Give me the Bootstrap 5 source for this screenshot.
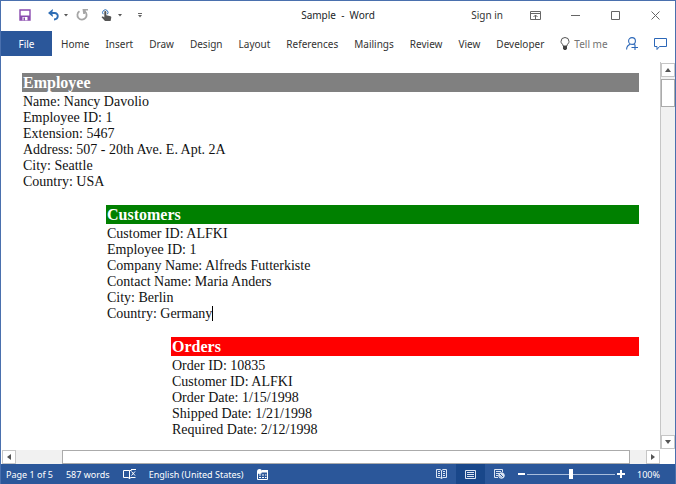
<!DOCTYPE html>
<html lang="en">
<head>
<meta charset="utf-8">
<meta name="viewport" content="width=device-width, initial-scale=1">
<title>Sample - Word</title>
<link href="https://cdn.jsdelivr.net/npm/bootstrap@5.3.0/dist/css/bootstrap.min.css" rel="stylesheet">
<style>
:root { --word-blue: #2b579a; --edge: #c6c6c6; }
body { font-family: "Noto Sans", "Open Sans", sans-serif; font-size: 10px; line-height: 16px; color: #333; }
button { color: inherit; background: transparent; border: 0; padding: 0; }
svg { display: block; flex: none; }
.app-window { border: 1px solid #4a70ae; border-bottom: 0; }
.title-row { display: grid; grid-template-columns: 1fr auto 1fr; height: 30px; }
.quick-tools { padding-left: 18px; }
.win-btn { width: 40px; height: 28px; }
.ribbon { height: 25px; }
.ribbon .nav-link { color: #333; padding: 0 8px; line-height: 26px; }
.ribbon .file-tab { background: var(--word-blue); color: #fff; width: 51px; flex: none; line-height: 26px; margin-right: 1px; padding: 0; }
.ribbon .tell-me { color: #737373; }
.page-area { padding: 17px 21px 0 21px; font: 14px/16px "Liberation Serif", "Times New Roman", serif; color: #111; }
.report-group { margin-bottom: 15px; }
.report-group h2 { font-size: 16px; line-height: 20px; height: 19px; font-weight: 700; color: #fff; margin: 0 0 2px; padding-left: 1px; }
.report-group p { margin: 0; padding-left: 1px; }
.employee h2 { background: #808080; }
.customers { margin-left: 84px; }
.customers h2 { background: #008000; }
.orders { margin-left: 149px; }
.orders h2 { background: #f00; }
.caret { display: inline-block; width: 1px; height: 15px; background: #000; vertical-align: -3px; }
.scroll-y { width: 15px; margin-top: 6px; border-left: 1px solid var(--edge); padding: 1px 0 0; background: #fff; }
.scroll-x { height: 14px; padding-left: 1px; }
.scroll-btn { width: 14px; height: 14px; border: 1px solid var(--edge); background: #fff; }
.lane { background: #f1f1f1; }
.lane-y { padding-top: 2px; }
.thumb-y { height: 28px; border: 1px solid #ababab; background: #fff; }
.thumb-x { border: 1px solid #ababab; background: #fff; margin: 0 16px 0 46px; }
.corner { height: 15px; }
.status { height: 20px; margin: 0 -1px; padding: 0 16px 0 6px; background: var(--word-blue); color: #fff; font-size: 9px; line-height: 19px; }
.status-gap { gap: 13px; }
.view-btn { width: 29px; height: 20px; }
.view-btn.active { background: #19478a; }
.zoom-range { appearance: none; width: 88px; height: 13px; margin: 0 2px; background: linear-gradient(#a9bddc, #a9bddc) center / 100% 1px no-repeat; }
.zoom-range::-webkit-slider-thumb { appearance: none; width: 4px; height: 10px; background: #fff; border: 0; border-radius: 0; }
.zoom-range::-moz-range-thumb { width: 4px; height: 10px; background: #fff; border: 0; border-radius: 0; }
</style>
<script src="https://cdn.jsdelivr.net/npm/bootstrap@5.3.0/dist/js/bootstrap.bundle.min.js"></script>
</head>
<body>
<div class="app-window d-flex flex-column vh-100 overflow-hidden bg-white">
  <header>
    <div class="title-row">
      <div class="quick-tools d-flex align-items-center pb-1">
        <button type="button" aria-label="Save"><svg width="12" height="12" viewBox="0 0 12 12"><path d="M1 1h10v10H1z" fill="#fff" stroke="#8a4baf" stroke-width="1.4"/><path d="M1 6.500h10V11H1z" fill="#8a4baf"/><path d="M3.500 8h5v3.300h-5z" fill="#fff"/><path d="M4.500 8.500h1.500v3h-1.500z" fill="#8a4baf"/></svg></button>
        <button type="button" class="ms-3" aria-label="Undo"><svg width="13" height="12" viewBox="0 0 11 12"><path d="M1.500 4h5C11.200 4 10.700 10.500 6 10.500" fill="none" stroke="#2f6eb5" stroke-width="1.900"/><path d="M4.800 0 0 4l4.800 4V5.800L2.800 4l2-1.800z" fill="#2f6eb5"/></svg></button>
        <button type="button" class="ms-1" aria-label="Undo list"><svg width="4" height="3"><path d="M0 0h4L2 2.500z" fill="#555"/></svg></button>
        <button type="button" aria-label="Repeat" class="ms-2"><svg width="12" height="12" viewBox="0 0 12 12"><path d="M3.500 2.200A4.600 4.600 0 1 0 8.800 2.400" fill="none" stroke="#a6a6a6" stroke-width="1.800"/><path d="M6.500 0h5.500v1.500H9.800l-1 3.500H7.200z" fill="#a6a6a6"/></svg></button>
        <button type="button" class="ms-2 ps-1" aria-label="Touch mode"><svg width="14" height="13" viewBox="0 0 14 13"><path d="M3.200 5.200a2.700 2.700 0 1 1 4.200 0" fill="none" stroke="#2f6eb5" stroke-width="1"/><path d="M4.300 3c0-1.300 2-1.300 2 0v3.300l4.200 1c.600.200.900.700.800 1.300L10.600 12H5L1.800 8.600c-.5-.8.500-1.600 1.200-1l1.300 1z" fill="#555"/></svg></button>
        <button type="button" class="ms-1" aria-label="Touch mode list"><svg width="4" height="3"><path d="M0 0h4L2 2.500z" fill="#555"/></svg></button>
        <button type="button" class="ms-3" aria-label="Customize toolbar"><svg width="4" height="5"><path d="M0 0h4v1H0zM0 2h4L2 4.500z" fill="#666"/></svg></button>
      </div>
      <div class="d-flex align-items-center text-dark pb-1"><span>Sample &nbsp;-&nbsp; Word</span></div>
      <div class="d-flex justify-content-end align-items-center pb-1">
        <button type="button" class="me-2 pe-1">Sign in</button>
        <button type="button" class="win-btn d-flex align-items-center justify-content-center" aria-label="Ribbon display options"><svg width="11" height="9" fill="none" stroke="#666"><path d="M.5.5h10v8H.5zM1 2.500h9M5.500 8V4M3.500 6l2-2 2 2"/></svg></button>
        <button type="button" class="win-btn d-flex align-items-center justify-content-center" aria-label="Minimize"><svg width="9" height="3"><path d="M0 1.500h9" stroke="#666"/></svg></button>
        <button type="button" class="win-btn d-flex align-items-center justify-content-center" aria-label="Maximize"><svg width="9" height="9"><path d="M.5.5h8v8h-8z" fill="none" stroke="#666"/></svg></button>
        <button type="button" class="win-btn d-flex align-items-center justify-content-center" aria-label="Close"><svg width="9" height="9"><path d="M.5.5l8 8M8.500.5l-8 8" stroke="#666"/></svg></button>
      </div>
    </div>
    <nav class="ribbon nav flex-nowrap text-nowrap" aria-label="Ribbon">
      <a class="nav-link file-tab text-center" href="#">File</a>
      <a class="nav-link" href="#">Home</a>
      <a class="nav-link" href="#">Insert</a>
      <a class="nav-link" href="#">Draw</a>
      <a class="nav-link" href="#">Design</a>
      <a class="nav-link" href="#">Layout</a>
      <a class="nav-link" href="#">References</a>
      <a class="nav-link" href="#">Mailings</a>
      <a class="nav-link" href="#">Review</a>
      <a class="nav-link" href="#">View</a>
      <a class="nav-link" href="#">Developer</a>
      <a class="nav-link tell-me d-flex align-items-center gap-1" href="#"><svg width="10" height="13" viewBox="0 0 10 13"><path d="M3 9V7.800C1.800 6.800 1 5.800 1 4.500a4 4 0 0 1 8 0C9 5.800 8.200 6.800 7 7.800V9z" fill="none" stroke="#555"/><path d="M3 9h4v2.500L6 13H4l-1-1.500z" fill="#444"/></svg>Tell me</a>
      <div class="d-flex align-items-center ms-auto gap-3 pe-2">
        <button type="button" aria-label="Share"><svg width="12" height="13" viewBox="0 0 12 13" fill="none" stroke="#2b67b8" stroke-width="1.100"><circle cx="6" cy="4" r="3.400"/><path d="M.6 12.500C.6 9.500 2.500 7.800 4.500 7.200M7.500 7.200l1 .6M5.500 10.500H12M9 7.500V13"/></svg></button>
        <button type="button" aria-label="Comments"><svg width="13" height="12" viewBox="0 0 13 12"><path d="M.5.5h12v8H5.500l-2.500 3v-3H.5z" fill="none" stroke="#2b67b8"/></svg></button>
      </div>
    </nav>
  </header>

  <main class="d-flex flex-grow-1 overflow-hidden">
    <div class="d-flex flex-column flex-grow-1 overflow-hidden">
      <article class="page-area flex-grow-1 overflow-hidden">
        <section class="report-group employee">
          <h2>Employee</h2>
          <p>Name: Nancy Davolio</p>
          <p>Employee ID: 1</p>
          <p>Extension: 5467</p>
          <p>Address: 507 - 20th Ave. E. Apt. 2A</p>
          <p>City: Seattle</p>
          <p>Country: USA</p>
        </section>
        <section class="report-group customers">
          <h2>Customers</h2>
          <p>Customer ID: ALFKI</p>
          <p>Employee ID: 1</p>
          <p>Company Name: Alfreds Futterkiste</p>
          <p>Contact Name: Maria Anders</p>
          <p>City: Berlin</p>
          <p>Country: Germany<span class="caret"></span></p>
        </section>
        <section class="report-group orders">
          <h2>Orders</h2>
          <p>Order ID: 10835</p>
          <p>Customer ID: ALFKI</p>
          <p>Order Date: 1/15/1998</p>
          <p>Shipped Date: 1/21/1998</p>
          <p>Required Date: 2/12/1998</p>
        </section>
      </article>
      <div class="scroll-x d-flex">
        <button type="button" class="scroll-btn d-flex align-items-center justify-content-center" aria-label="Scroll left"><svg width="4" height="6"><path d="M4 0v6L0 3z" fill="#555"/></svg></button>
        <div class="lane flex-grow-1 d-flex"><div class="thumb-x flex-grow-1"></div></div>
        <button type="button" class="scroll-btn d-flex align-items-center justify-content-center" aria-label="Scroll right"><svg width="4" height="6"><path d="M0 0v6l4-3z" fill="#555"/></svg></button>
      </div>
    </div>
    <div class="d-flex flex-column">
      <div class="scroll-y flex-grow-1 d-flex flex-column">
        <button type="button" class="scroll-btn d-flex align-items-center justify-content-center" aria-label="Scroll up"><svg width="6" height="4"><path d="M0 4h6L3 0z" fill="#555"/></svg></button>
        <div class="lane lane-y flex-grow-1"><div class="thumb-y"></div></div>
        <button type="button" class="scroll-btn d-flex align-items-center justify-content-center" aria-label="Scroll down"><svg width="6" height="4"><path d="M0 0h6L3 4z" fill="#555"/></svg></button>
      </div>
      <div class="corner"></div>
    </div>
  </main>

  <footer class="status d-flex align-items-center text-nowrap">
    <div class="d-flex align-items-center status-gap">
      <span>Page 1 of 5</span>
      <span>587 words</span>
      <button type="button" aria-label="Proofing errors"><svg width="13" height="11" fill="none" stroke="#fff"><path d="M6.500 9.500V1.500H.5v7h5l1 1.500 1-1.500h5M6.500 1.500h2M8.500 2.500l3.500 4M12 2.500l-3.500 4"/><path d="M8 .5h5" /></svg></button>
      <span>English (United States)</span>
      <button type="button" aria-label="Macro recording"><svg width="11" height="11" viewBox="0 0 11 11"><path d="M.5 3v7.500h10v-9H5" fill="none" stroke="#fff"/><circle cx="2.500" cy="2.500" r="2.500" fill="#fff"/><path d="M5 1h6v2.500H5zM2 5.500h2v1H2zM5 5.500h2v1H5zM8 5.500h1.500v1H8zM2 8h2v1H2zM5 8h2v1H5zM8 8h1.500v1H8z" fill="#fff"/></svg></button>
    </div>
    <div class="d-flex align-items-center ms-auto">
      <button type="button" class="view-btn d-flex align-items-center justify-content-center" aria-label="Read mode"><svg width="11" height="10" fill="none" stroke="#dce5f3"><path d="M.5.5h3.500l1.500 1 1.500-1h3.500v8H7L5.500 9.500 4 8.500H.5zM5.500 1.500v8M2 2.500h2M2 4.500h2M2 6.500h2M7 2.500h2M7 4.500h2M7 6.500h2"/></svg></button>
      <button type="button" class="view-btn active d-flex align-items-center justify-content-center" aria-label="Print layout"><svg width="11" height="9" fill="none" stroke="#dce5f3"><path d="M.5.5h10v8H.5zM2 2.500h7M2 4.500h7M2 6.500h7"/></svg></button>
      <button type="button" class="view-btn d-flex align-items-center justify-content-center" aria-label="Web layout"><svg width="11" height="10" fill="none" stroke="#dce5f3"><path d="M4 8.500H.5v-8h8V3M2 2.500h5M2 4.500h3M2 6.500h2"/><circle cx="7.500" cy="6.500" r="2.800" fill="#dce5f3"/><path d="M6 5l3 3M6 7.500l1 1" stroke="#2b579a"/></svg></button>
      <button type="button" class="ms-1" aria-label="Zoom out"><svg width="7" height="8"><path d="M0 3h7v2H0z" fill="#fff"/></svg></button>
      <input class="zoom-range" type="range" min="0" max="200" value="100" aria-label="Zoom">
      <button type="button" aria-label="Zoom in"><svg width="8" height="8"><path d="M0 3h3V0h2v3h3v2H5v3H3V5H0z" fill="#fff"/></svg></button>
      <span class="ms-2 ps-1">100%</span>
    </div>
  </footer>
</div>
</body>
</html>
